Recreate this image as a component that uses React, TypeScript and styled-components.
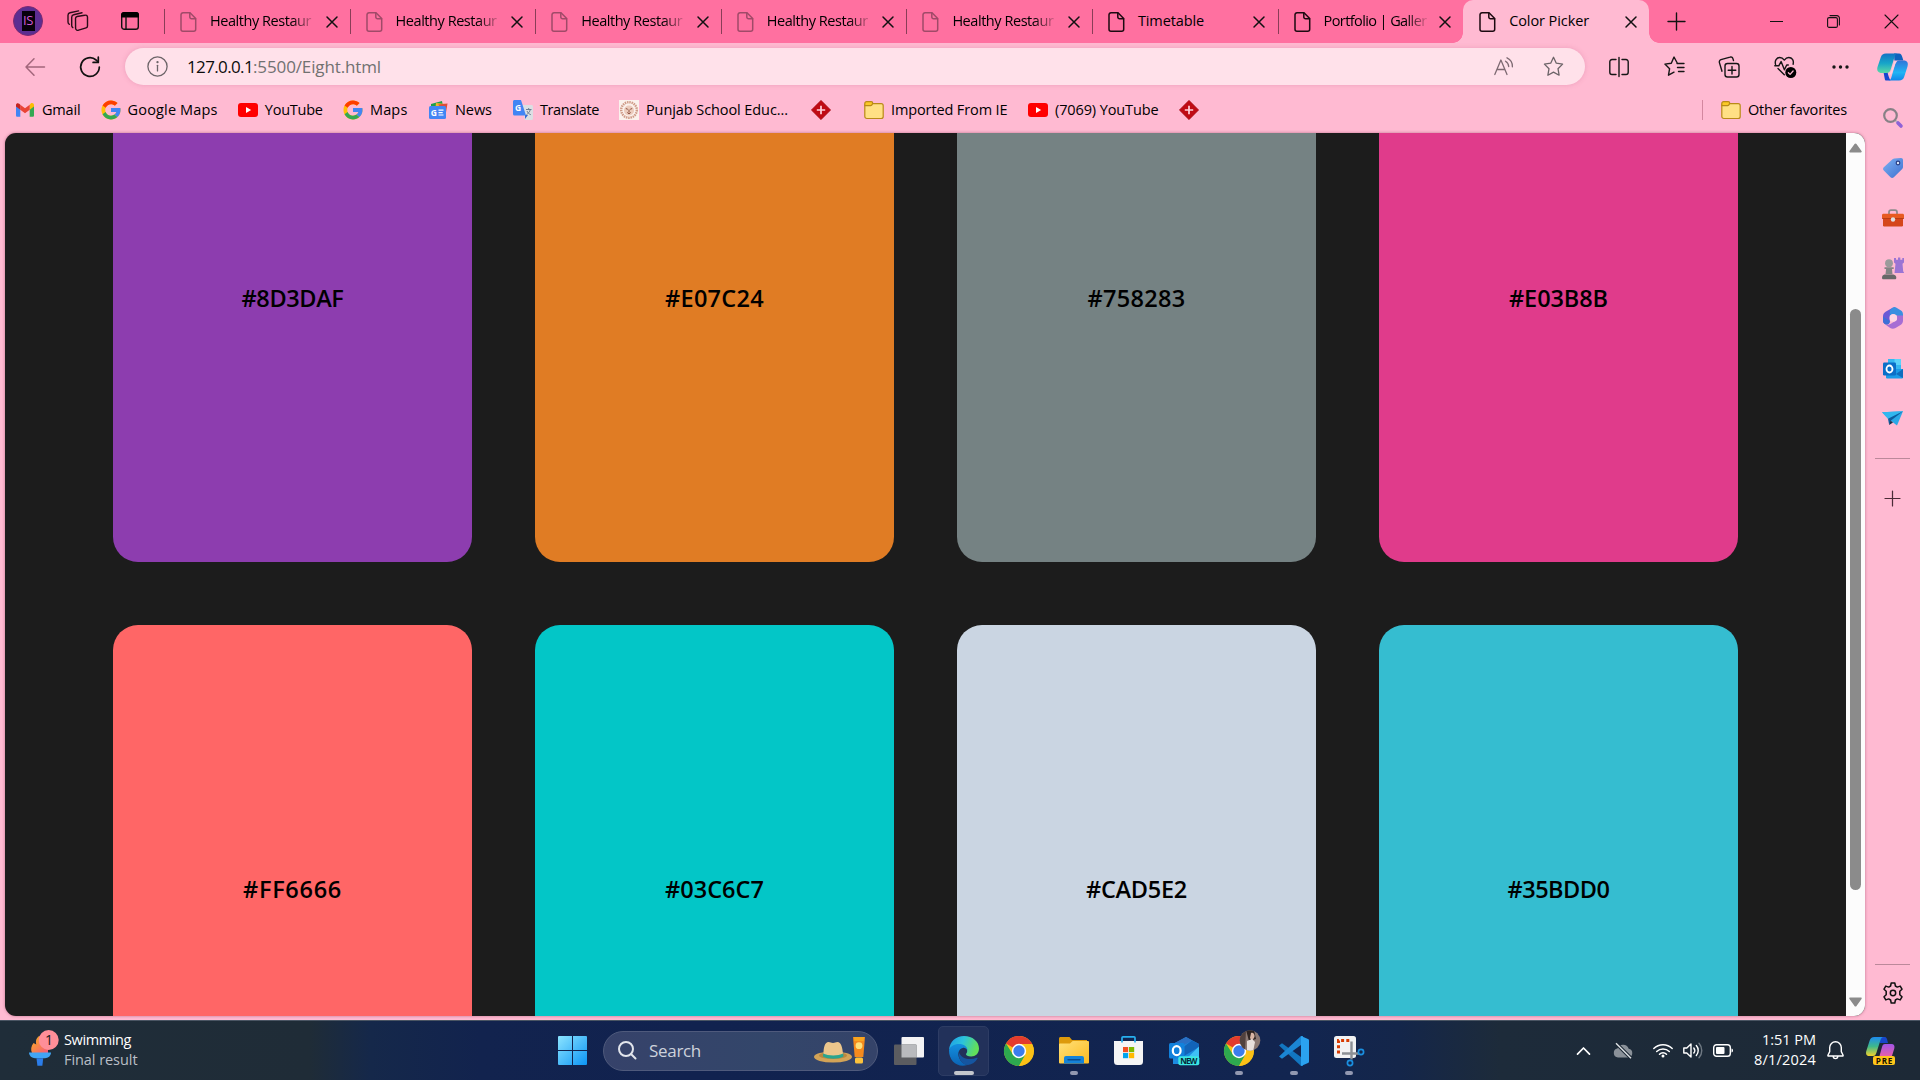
import React, { useLayoutEffect, useRef, useState } from 'react';
import styled, { createGlobalStyle, css } from 'styled-components';

const GlobalStyle = createGlobalStyle`
  *, *::before, *::after { box-sizing: border-box; }
  html, body { margin: 0; padding: 0; overflow: hidden; }
  body { font-family: 'Open Sans', 'Noto Sans', sans-serif; font-size: 14.5px; color: #000; }
  svg { display: block; flex: none; overflow: visible; }
`;

/* ---------- text with a fixed advance width ---------- */

const FitSpan = styled.span`
  display: inline-block;
  white-space: pre;
`;

function Fit({ w, children }: { w: number; children: string }) {
  const ref = useRef<HTMLSpanElement>(null);
  const [spacing, setSpacing] = useState(0);
  useLayoutEffect(() => {
    const el = ref.current;
    if (!el) return;
    el.style.letterSpacing = '0px';
    const natural = el.getBoundingClientRect().width;
    setSpacing((w - natural) / children.length);
    el.style.letterSpacing = `${(w - natural) / children.length}px`;
  }, [w, children]);
  return <FitSpan ref={ref} style={{ letterSpacing: `${spacing}px` }}>{children}</FitSpan>;
}

/* ---------- shell ---------- */

const Desktop = styled.div`
  width: 1920px;
  height: 1080px;
  display: flex;
  flex-direction: column;
  overflow: hidden;
  background: #ffbad2;
`;

const Browser = styled.div`
  height: 1020px;
  display: flex;
  flex-direction: column;
  background: #ffbad2;
`;

const TabStrip = styled.header`
  height: 43px;
  display: flex;
  background: #ff70a0;
`;

const StripTools = styled.div`
  width: 164px;
  display: flex;
  align-items: center;
  padding-left: 13px;
  padding-bottom: 1px;
`;

const Avatar = styled.div`
  width: 30px;
  height: 30px;
  border-radius: 50%;
  background: #5c2d91;
  border: 1px solid #7a2a72;
  display: flex;
  align-items: center;
  justify-content: center;
`;

const AvatarPlate = styled.div`
  width: 13px;
  height: 20px;
  background: #07000c;
  color: #d25ad8;
  font-size: 13px;
  line-height: 18px;
  letter-spacing: -0.5px;
  text-align: center;
`;

const StripIcon = styled.div<{ $left: number }>`
  margin-left: ${(p) => p.$left}px;
`;

const TabBox = styled.div<{ $active?: boolean }>`
  position: relative;
  width: 185.6px;
  height: 43px;
  flex: none;
  display: flex;
  align-items: center;
  padding: 0 0 0 16px;
  ${(p) =>
    p.$active
      ? css`
          background: #ffbad2;
          border-radius: 10px 10px 0 0;
          &::before, &::after {
            content: '';
            position: absolute;
            bottom: 0;
            width: 10px;
            height: 10px;
          }
          &::before { left: -10px; background: radial-gradient(circle at 0 0, transparent 9.5px, #ffbad2 10px); }
          &::after { right: -10px; background: radial-gradient(circle at 100% 0, transparent 9.5px, #ffbad2 10px); }
        `
      : css`
          &::before {
            content: '';
            position: absolute;
            left: 0;
            top: 9px;
            width: 1px;
            height: 25px;
            background: #8a3d57;
          }
        `}
`;

const TabTitle = styled.div<{ $fade?: boolean }>`
  width: 104px;
  margin-left: 13px;
  white-space: nowrap;
  line-height: 20px;
  padding-bottom: 1px;
  ${(p) => p.$fade && css`mask-image: linear-gradient(90deg, #000 82px, transparent 106px);`}
`;

const TabClose = styled.div`
  margin-left: 12.5px;
`;

const NewTab = styled.div`
  width: 56px;
  display: flex;
  align-items: center;
  justify-content: center;
  padding-bottom: 1px;
`;

const WindowButtons = styled.div`
  margin-left: auto;
  display: flex;
`;

const WindowButton = styled.div`
  width: 57.5px;
  display: flex;
  align-items: center;
  justify-content: center;
`;

const BrowserBody = styled.div`
  flex: 1;
  display: flex;
  min-height: 0;
`;

const MainColumn = styled.div`
  width: 1865px;
  display: flex;
  flex-direction: column;
`;

const Toolbar = styled.div`
  height: 47px;
  display: flex;
  align-items: center;
  padding-left: 25px;
`;

const Reload = styled.div`
  margin: 0 24px 0 34px;
`;

const AddressBar = styled.div`
  width: 1460px;
  height: 37px;
  flex: none;
  border-radius: 19px;
  background: #ffe1ea;
  box-shadow: 0 0 5px rgba(190, 90, 130, 0.28);
  display: flex;
  align-items: center;
  padding: 0 21px 0 22px;
  margin-right: 6px;
`;

const Url = styled.div`
  margin-left: 19px;
  flex: 1;
  font-size: 17px;
  line-height: 22px;
  color: #717171;
`;

const UrlHost = styled.span`
  color: #0b0b0b;
`;

const AddressActions = styled.div`
  display: flex;
  gap: 29px;
  align-items: center;
`;

const ToolButton = styled.div`
  width: 55.4px;
  flex: none;
  display: flex;
  justify-content: center;
`;

const BookmarkBar = styled.nav`
  height: 43px;
  display: flex;
  align-items: center;
  padding: 0 0 4px 15px;
`;

const BookmarkItem = styled.div<{ $pitch: number }>`
  width: ${(p) => p.$pitch}px;
  flex: none;
  display: flex;
  align-items: center;
  gap: 7px;
  line-height: 20px;
  white-space: nowrap;
`;

const OtherFavorites = styled.div`
  margin-left: auto;
  width: 163px;
  height: 20px;
  border-left: 1px solid #d3879f;
  padding-left: 18px;
  display: flex;
  align-items: center;
  gap: 7px;
`;

const ViewportRow = styled.div`
  flex: 1;
  min-height: 0;
  padding: 0 0 4px 5px;
`;

const Viewport = styled.div`
  height: 100%;
  display: flex;
  border-radius: 11px;
  overflow: hidden;
  background: #1c1c1c;
  box-shadow: 0 0 3px rgba(120, 40, 70, 0.5);
`;

const PageArea = styled.main`
  flex: 1;
  overflow: hidden;
  display: flex;
  justify-content: center;
  align-items: flex-start;
`;

const Palette = styled.div`
  margin-top: -99px;
  display: grid;
  grid-template-columns: repeat(4, 359px);
  grid-auto-rows: 528px;
  gap: 63px;
  flex: none;
`;

const Swatch = styled.div<{ $color: string }>`
  background: ${(p) => p.$color};
  border-radius: 25px;
  display: flex;
  align-items: center;
  justify-content: center;
  font-family: 'Open Sans', 'Noto Sans', sans-serif;
  font-size: 23.5px;
  font-weight: 600;
  line-height: 28px;
`;

const Scrollbar = styled.div`
  width: 19px;
  background: #fcfcfc;
  display: flex;
  flex-direction: column;
  align-items: center;
  padding: 10px 0 9px;
`;

const ScrollThumb = styled.div`
  width: 11px;
  height: 581px;
  border-radius: 6px;
  background: #8b8b8b;
  margin: 156px 0 107px;
`;

const Sidebar = styled.aside`
  width: 55px;
  display: flex;
  flex-direction: column;
  align-items: center;
`;

const SideCell = styled.div<{ $h: number; $gap?: number }>`
  height: ${(p) => p.$h}px;
  margin-bottom: ${(p) => p.$gap ?? 0}px;
  flex: none;
  display: flex;
  align-items: center;
  justify-content: center;
`;

const SideDivider = styled.div<{ $push?: boolean }>`
  width: 35px;
  height: 1px;
  flex: none;
  background: #bb889a;
  margin-top: ${(p) => (p.$push ? 'auto' : '14px')};
`;

/* ---------- taskbar ---------- */

const Taskbar = styled.footer`
  height: 60px;
  display: flex;
  align-items: center;
  border-top: 1px solid #4a5563;
  background: linear-gradient(90deg, #1f2d39 0, #1f2c37 310px, #15284a 370px, #12234e 480px, #11224f 700px, #122550 1300px, #14264a 1400px, #1d2b3a 1500px, #1d2936 100%);
  color: #fff;
`;

const Widgets = styled.div`
  width: 558px;
  padding-left: 29px;
  display: flex;
  gap: 13px;
  align-items: center;
`;

const WidgetLines = styled.div`
  display: flex;
  flex-direction: column;
  line-height: 20px;
  padding-bottom: 1px;
`;

const Muted = styled.div`
  color: #b9bfc6;
`;

const SearchBox = styled.div`
  width: 275px;
  height: 40px;
  margin: 0 3px 0 16px;
  border-radius: 20px;
  background: linear-gradient(90deg, #36426a, #33466a 60%, #354369);
  border: 1px solid #4f5a7c;
  display: flex;
  align-items: center;
  padding: 0 12px 0 14px;
  font-size: 17px;
  color: #cdd2dc;
`;

const SearchText = styled.div`
  flex: 1;
  padding: 0 0 0 12px;
  line-height: 24px;
`;

const AppSlot = styled.div<{ $active?: boolean; $dot?: boolean }>`
  position: relative;
  width: 51px;
  height: 50px;
  margin: 0 2px;
  border-radius: 5px;
  display: flex;
  align-items: center;
  justify-content: center;
  ${(p) => p.$active && css`background: #22315a; border: 1px solid #2d3c64;`}
  ${(p) =>
    (p.$dot || p.$active) &&
    css`
      &::after {
        content: '';
        position: absolute;
        bottom: ${p.$active ? 0 : 1}px;
        left: 50%;
        transform: translateX(-50%);
        width: ${p.$active ? 20 : 8}px;
        height: 4px;
        border-radius: 2px;
        background: ${p.$active ? '#c3c6cc' : '#9298b0'};
      }
    `}
`;

const Tray = styled.div`
  margin-left: auto;
  display: flex;
  align-items: center;
  padding-right: 14px;
`;

const TrayCell = styled.div<{ $w: number }>`
  width: ${(p) => p.$w}px;
  display: flex;
  justify-content: center;
`;

const Clock = styled.div`
  width: 73px;
  display: flex;
  flex-direction: column;
  align-items: flex-end;
  line-height: 20px;
  padding-bottom: 1px;
`;

/* ---------- icons ---------- */

const line = (stroke = '#161616', w = 1.4) => ({
  fill: 'none',
  stroke,
  strokeWidth: w,
  strokeLinecap: 'round' as const,
  strokeLinejoin: 'round' as const,
});

const FileIcon = ({ color }: { color: string }) => (
  <svg width="17" height="20" viewBox="0 0 17 20" {...line(color, 1.5)}>
    <path d="M3 .8h7l5.700 5.700v10.700a2 2 0 0 1-2 2H3a2 2 0 0 1-2-2V2.800a2 2 0 0 1 2-2z" />
    <path d="M9.800 1v4a1.700 1.700 0 0 0 1.700 1.700h4" />
  </svg>
);

const CrossIcon = ({ s = 10, w = 1.5 }: { s?: number; w?: number }) => (
  <svg width={s} height={s} viewBox="0 0 10 10" {...line('#111', (w * 10) / s)}>
    <path d="M0 0l10 10M10 0L0 10" />
  </svg>
);

const WorkspacesIcon = () => (
  <svg width="22" height="22" viewBox="0 0 22 22" {...line('#2a0c18', 1.4)}>
    <path d="M8.500 8.500a2 2 0 0 1 1.600-2l7.600-1.200a2 2 0 0 1 2.800 1.800v8.800a2 2 0 0 1-1.400 1.900l-7.500 2.400a2.200 2.200 0 0 1-3-2z" />
    <path d="M5.800 17.600a2.300 2.300 0 0 1-1.100-2V7.200a2.600 2.600 0 0 1 2-2.400l8.300-2" />
    <path d="M2.400 14.300A2.400 2.400 0 0 1 1 12.100V5.300a2.600 2.600 0 0 1 2-2.500L11.600.9" />
  </svg>
);

const TabActionsIcon = () => (
  <svg width="18" height="18" viewBox="0 0 18 18">
    <rect x=".7" y=".7" width="16.600" height="16.600" rx="2.600" {...line('#111', 1.4)} />
    <path d="M0 5.500V3a3 3 0 0 1 3-3h12a3 3 0 0 1 3 3v2.500z" fill="#000" />
    <path d="M5 5v12" {...line('#111', 1.4)} />
  </svg>
);

const PlusIcon = ({ s, color = '#111' }: { s: number; color?: string }) => (
  <svg width={s} height={s} viewBox="0 0 16 16" {...line(color, 1.3)}>
    <path d="M8 0v16M0 8h16" />
  </svg>
);

const BackIcon = () => (
  <svg width="20" height="18" viewBox="0 0 20 18" {...line('#a2667b', 1.5)}>
    <path d="M9 .8L1 9l8 8.200M1 9h18.500" />
  </svg>
);

const ReloadIcon = () => (
  <svg width="22" height="22" viewBox="0 0 22 22" {...line('#111', 1.7)}>
    <path d="M20.300 11a9.300 9.300 0 1 1-3.200-7l1.700 1.600" />
    <path d="M19.300 1.200v5.200h-5.200" />
  </svg>
);

const InfoIcon = () => (
  <svg width="21" height="21" viewBox="0 0 21 21" {...line('#6c6468', 1.3)}>
    <circle cx="10.500" cy="10.500" r="9.600" />
    <path d="M10.500 9.300v5.600" />
    <circle cx="10.500" cy="6.200" r=".5" fill="#6c6468" />
  </svg>
);

const ReadAloudIcon = () => (
  <svg width="20" height="20" viewBox="0 0 20 20" {...line('#7d6a72', 1.3)}>
    <path d="M.8 17.500L6.900 3l6.100 14.500M3 12.500h7.800" />
    <path d="M11.500 4.200a6.500 6.500 0 0 1 3.200 5.300M13 .8a9.500 9.500 0 0 1 5.400 9" />
  </svg>
);

const StarIcon = () => (
  <svg width="21" height="21" viewBox="0 0 21 21" {...line('#6c6468', 1.3)}>
    <path d="M10.500 1.300l2.800 5.900 6.300.9-4.600 4.600 1.100 6.500-5.600-3.100-5.600 3.100L6 12.700 1.400 8.100l6.300-.9z" />
  </svg>
);

const SplitIcon = () => (
  <svg width="20" height="20" viewBox="0 0 20 20" {...line()}>
    <path d="M7 2.500H3a2.200 2.200 0 0 0-2.200 2.200v10.600A2.200 2.200 0 0 0 3 17.500h4M13 2.500h4a2.200 2.200 0 0 1 2.200 2.200v10.600a2.200 2.200 0 0 1-2.200 2.200h-4M10 .5v19" />
  </svg>
);

const FavoritesIcon = () => (
  <svg width="21" height="21" viewBox="0 0 21 21" {...line()}>
    <path d="M13.500 7.500L10 1 7.300 7.200.9 8.100l4.700 4.600-1.100 6.500 5.500-3M13 7.500h7M13.500 11.500h6.500M14.500 15.500h5.500" />
  </svg>
);

const CollectionsIcon = () => (
  <svg width="22" height="22" viewBox="0 0 22 22" {...line()}>
    <rect x="7" y="7.500" width="14" height="13.500" rx="2.500" />
    <path d="M14 10.500v7.500M10.200 14.300h7.600M15.500 4.500l-.6-1.900a2.300 2.300 0 0 0-2.900-1.500L3 3.700a2.300 2.300 0 0 0-1.600 2.900l2.600 8.600" />
  </svg>
);

const HealthIcon = () => (
  <svg width="22" height="22" viewBox="0 0 22 22" {...line()}>
    <path d="M1.600 8.500C.4 4.700 2.600 1.500 5.800 1.500c2 0 3.300 1 4.500 2.600 1.200-1.600 2.500-2.600 4.500-2.600 3.200 0 5.300 3 4.300 6.700M4 12.500l6.300 6.300" />
    <path d="M.8 9.800h4l2.300-4.300 3.300 8.300 2.300-4.800h1.600" />
    <circle cx="16.800" cy="16.500" r="5.500" fill="#000" stroke="none" />
    <path d="M14.400 16.700l1.700 1.700 3-3.400" stroke="#ffbad2" strokeWidth="1.300" />
  </svg>
);

const DotsIcon = () => (
  <svg width="17" height="4" viewBox="0 0 17 4" fill="#161616">
    <circle cx="2" cy="2" r="1.700" />
    <circle cx="8.500" cy="2" r="1.700" />
    <circle cx="15" cy="2" r="1.700" />
  </svg>
);

const CopilotIcon = () => (
  <svg width="31" height="28" viewBox="0 0 31 28">
    <defs>
      <linearGradient id="cpA" x1="0" y1="0" x2="0" y2="1">
        <stop offset="0" stopColor="#1473c4" />
        <stop offset=".5" stopColor="#17a5c9" />
        <stop offset="1" stopColor="#5bd9a5" />
      </linearGradient>
      <linearGradient id="cpB" x1="0" y1="0" x2="0" y2="1">
        <stop offset="0" stopColor="#2f74d8" />
        <stop offset=".6" stopColor="#20b4f4" />
        <stop offset="1" stopColor="#0f86ea" />
      </linearGradient>
    </defs>
    <path d="M17 .5h5c2 0 2.600 1.300 3.200 3.300l1.200 3.700h-9z" fill="#0f62bd" />
    <path d="M8.500 27.500h5c-1-2-2.300-4.500-3-8.500h-4l1 5.500c.3 1.700.5 2.500 1 3z" fill="#1745cf" />
    <path d="M9 .5h12c-2 0-2.700 1.200-3.300 3l-4 13C13 18.700 12 20 9.500 20H5c-4 0-5.500-2.600-4.500-6L3.800 4.300C4.700 1.700 6 .5 9 .5z" fill="url(#cpA)" />
    <path d="M22 27.500H11c2 0 2.700-1.300 3.300-3l4-13.500c.7-2.300 1.700-3.500 4-3.500h4.200c4 0 5 2.600 4 6L27.200 23.700c-.9 2.600-2.200 3.800-5.200 3.800z" fill="url(#cpB)" />
    <path d="M17.500 8.500h2.800c-1.500.7-2 2-2.500 3.500L15 20c-.5 1-1.500 1.500-3 1.500 1-.7 1.700-2 2.200-3.500z" fill="#ffd0e0" />
  </svg>
);

const GmailIcon = () => (
  <svg width="20" height="20" viewBox="0 0 20 20">
    <path d="M1 5v10.500c0 .8.600 1.300 1.300 1.300h3V9z" fill="#4285f4" />
    <path d="M19 5v10.500c0 .8-.6 1.300-1.300 1.300h-3V9z" fill="#34a853" />
    <path d="M14.700 4.700V9.800L19 6.500V5c0-1.800-2-2.500-3.300-1.500z" fill="#fbbc04" />
    <path d="M5.300 9.800V4.700L10 8.200l4.700-3.500v5.100L10 13.300z" fill="#ea4335" />
    <path d="M1 5v1.500l4.300 3.300V4.700l-1-.9C3 2.600 1 3.300 1 5z" fill="#c5221f" />
  </svg>
);

const GoogleIcon = () => (
  <svg width="20" height="20" viewBox="3 3 42 42">
    <path fill="#FFC107" d="M43.600 20H24v8h11.300c-1.600 4.700-6.100 8-11.300 8-6.600 0-12-5.400-12-12s5.400-12 12-12c3.100 0 5.900 1.200 8 3l5.700-5.600C34 6.100 29.300 4 24 4 13 4 4 13 4 24s9 20 20 20 20-9 20-20c0-1.300-.1-2.700-.4-4z" />
    <path fill="#FF3D00" d="M6.300 14.700l6.600 4.800C14.700 15.100 19 12 24 12c3.100 0 5.900 1.200 8 3l5.700-5.600C34 6.100 29.300 4 24 4 16.300 4 9.700 8.300 6.300 14.700z" />
    <path fill="#34A853" d="M24 44c5.200 0 9.900-2 13.400-5.200l-6.200-5.200C29.200 35.100 26.700 36 24 36c-5.200 0-9.600-3.300-11.300-7.900l-6.500 5C9.500 39.600 16.200 44 24 44z" />
    <path fill="#4285F4" d="M43.600 20H24v8h11.300c-.8 2.200-2.200 4.200-4.100 5.600l6.200 5.200C37 39.200 44 34 44 24c0-1.300-.1-2.700-.4-4z" />
  </svg>
);

const YouTubeIcon = () => (
  <svg width="20" height="20" viewBox="0 0 20 20">
    <rect y="3" width="20" height="14" rx="3" fill="#f00" />
    <path d="M8 7l5.200 3L8 13z" fill="#fff" />
  </svg>
);

const SvgLabel = styled.text`
  font-family: 'Open Sans', sans-serif;
  font-weight: 700;
`;

const NewsIcon = () => (
  <svg width="20" height="20" viewBox="0 0 20 20">
    <path d="M3 4l11-3 1 5H3z" fill="#1e9e4a" />
    <path d="M8 3l10 1-1 8H7z" fill="#f0b429" />
    <path d="M10 4.500l9.500-1-1.500 9z" fill="#dd4b39" />
    <rect x="1" y="6" width="17" height="13" rx="1.500" fill="#4285f4" />
    <SvgLabel x="2.800" y="15.800" fontSize="8.500" fill="#fff">G</SvgLabel>
    <path d="M10.500 10.200h5M10.500 12.600h4.200M10.500 15h5" stroke="#fff" strokeWidth="1.200" />
  </svg>
);

const TranslateIcon = () => (
  <svg width="20" height="20" viewBox="0 0 20 20">
    <path d="M8 5h10.500c.8 0 1.500.7 1.500 1.500v12c0 .8-.7 1.500-1.500 1.500H12z" fill="#dcdfe3" />
    <path d="M12 15h3l-3 4z" fill="#3367d6" />
    <path d="M1.500 0H8l5 15.500H1.500A1.500 1.500 0 0 1 0 14V1.500C0 .7.700 0 1.500 0z" fill="#4285f4" />
    <SvgLabel x="2" y="10.600" fontSize="8.500" fill="#fff">G</SvgLabel>
    <path d="M13 9.500h5.500M15.700 8v1.500M17.300 9.500c-.5 2.500-2 4-3.800 5M14 11c.6 1.600 2 3 3.800 3.700" stroke="#6b7f94" strokeWidth="1" fill="none" />
  </svg>
);

const LionIcon = () => (
  <svg width="20" height="20" viewBox="0 0 20 20">
    <rect width="20" height="20" fill="#fbf1ec" />
    <circle cx="10" cy="10" r="7.800" fill="none" stroke="#cf9a86" strokeWidth="2.400" strokeDasharray="1.500 .8" />
    <circle cx="10" cy="10.500" r="5" fill="#eccbbc" />
    <path d="M6.800 8.500l2 .8M13.200 8.500l-2 .8M8.300 12.500L10 13.800l1.700-1.300M10 9.500v3" stroke="#8d4e3c" strokeWidth="1" fill="none" />
  </svg>
);

const DiamondIcon = () => (
  <svg width="20" height="20" viewBox="0 0 20 20">
    <path d="M10 .3L19.700 10 10 19.700.3 10z" fill="#bf0b14" stroke="#a3141c" strokeWidth=".6" />
    <path d="M10 5.800v8.400M5.800 10h8.400" stroke="#ffd3dc" strokeWidth="1.700" />
  </svg>
);

const FolderIcon = () => (
  <svg width="20" height="20" viewBox="0 0 20 20">
    <rect x=".8" y="3.700" width="18.400" height="14.800" rx="2" fill="#ffe084" stroke="#b98a17" strokeWidth="1.200" />
    <path d="M2.600 1.600h4.600c.8 0 1.500.6 1.500 1.400L8.200 4.600c-.3.700-.8 1-1.500 1H.8V3.400c0-1 .8-1.800 1.800-1.800z" fill="#fbc926" stroke="#b98a17" strokeWidth="1.200" />
  </svg>
);

const SideSearchIcon = () => (
  <svg width="20" height="20" viewBox="0 0 20 20" fill="none" strokeLinecap="round">
    <path d="M13 13l1.500 1.500" stroke="#b9b3bb" strokeWidth="2" />
    <path d="M15 15l3 3" stroke="#8f62d6" strokeWidth="3.600" />
    <circle cx="7.500" cy="7.500" r="6.300" stroke="#888186" strokeWidth="2.200" />
  </svg>
);

const TagIcon = () => (
  <svg width="20" height="20" viewBox="0 0 20 20">
    <defs>
      <linearGradient id="tg" x1="0" y1="0" x2="1" y2="1">
        <stop offset="0" stopColor="#7cb2f2" />
        <stop offset="1" stopColor="#3f6fd0" />
      </linearGradient>
    </defs>
    <path d="M11.500.5L18 0c1.200 0 2 .8 2 2v7c0 .8-.2 1.300-.8 1.900l-8.400 8.300c-1 1-2.300 1-3.300 0L.8 12.600c-1-1-1-2.300 0-3.300L9.500 1.300c.6-.5 1.200-.7 2-.8z" fill="url(#tg)" />
    <circle cx="15" cy="5" r="1.800" fill="#dce8f8" stroke="#2b3f85" strokeWidth="1.200" />
  </svg>
);

const ToolboxIcon = () => (
  <svg width="22" height="18" viewBox="0 0 22 18">
    <path d="M7 5V3.200C7 2 7.800 1.200 9 1.200h4c1.200 0 2 .8 2 2V5" stroke="#8e8a8c" strokeWidth="1.800" fill="none" />
    <rect x="1" y="8" width="20" height="9.500" rx="1.200" fill="#d5461b" />
    <path d="M1.500 4.700h19c.8 0 1.500.6 1.500 1.300v3.500H0V6c0-.7.700-1.300 1.500-1.300z" fill="#e75a21" />
    <path d="M0 9.500h22" stroke="#a9330e" strokeWidth=".7" />
    <circle cx="11" cy="10.500" r="2.200" fill="#dfe0e2" />
  </svg>
);

const ChessIcon = () => (
  <svg width="22" height="23" viewBox="0 0 22 23">
    <path d="M12 1h2v1.800h2V.5h2.300v2.300h2V1H22v4.500l-1.500 1.300.7 7.700c.5.200.8.800.8 1.500H12.500l1-9.200L12 5.500z" fill="#9b74d4" />
    <circle cx="7" cy="6.200" r="3.900" fill="#9b9b9b" />
    <path d="M2.500 10.300h9.200v1.800H10l.5 5.200h-7l.6-5.200H2.500z" fill="#858585" />
    <path d="M2.500 17.500h9c1.500.3 2.800 1.500 2.800 3.300 0 1-.5 1.500-1.500 1.500H1.500C.5 22.300 0 21.800 0 20.800c0-1.800 1-3 2.500-3.300z" fill="#686868" />
  </svg>
);

const M365Icon = () => (
  <svg width="20" height="22" viewBox="0 0 20 22">
    <path d="M10.500.3L3 4.500C1 5.700 0 7 0 9.200v4.600c0 2 1.500 3.700 3.500 3.700 3 0 3.300-2 3.300-4.300V9c0-2 1.200-3.300 3-3.800z" fill="#6a59d6" />
    <path d="M10.500.3c1-.5 2-.2 3 .4L18 3.500c1.500 1 2 2.500 2 4v5L13.200 8.200c-1.700-1-2.900-1.600-4.700-.6l-1.700 1.300V5c0-2 1.500-3.700 3.700-4.700z" fill="#3a8fe0" />
    <path d="M20 8.500v5.200c0 2-1 3.300-2.500 4.200l-5 3c-1.800 1-3.700 1-5.300 0L3 18c3 .2 4.500-1 6-2l4-2.500c1-.6 1-1.300 1-2.200V8.500z" fill="#a66dd4" />
    <path d="M0 9.500v4.300c0 2 1.500 3.700 3.500 3.700 2.300 0 3.300-1.500 3.300-3.500z" fill="#3e6fd6" />
    <circle cx="10.300" cy="11" r="3.800" fill="#ffd6e4" />
  </svg>
);

const SideOutlookIcon = () => (
  <svg width="20" height="20" viewBox="0 0 20 20">
    <path d="M5 0h13v12H5z" fill="#35b8f1" />
    <path d="M11.500 0H18v6h-6.500z" fill="#5bd3fa" />
    <path d="M3 10h17v8.500a1 1 0 0 1-1 1H4a1 1 0 0 1-1-1z" fill="#1b9be8" />
    <path d="M20 10l-7 5 7 4z" fill="#0f6dbd" />
    <rect y="3.500" width="13" height="13" rx="1.200" fill="#0b6fc8" />
    <ellipse cx="6.500" cy="10" rx="3" ry="3.500" fill="none" stroke="#fff" strokeWidth="1.800" />
  </svg>
);

const PlaneIcon = () => (
  <svg width="21" height="15" viewBox="0 0 21 15">
    <path d="M0 1.200L21 .3 15 14.500 8.500 9.500z" fill="#2aa8e6" />
    <path d="M0 1.200L21 .3 6 8z" fill="#31b7ef" />
    <path d="M6 7.800L21 .3 9 9.600 7.200 14z" fill="#0d5c9e" />
    <path d="M7.200 14l1.300-4.500 2.500 2z" fill="#14324d" />
  </svg>
);

const GearIcon = () => (
  <svg width="22" height="22" viewBox="0 0 22 22" {...line('#111', 1.5)}>
    <path d="M9.200 1h3.600l.6 3 1.900 1.100 2.900-1L20 7.200l-2.200 2v3.600l2.200 2-1.800 3.100-2.900-1-1.900 1.100-.6 3H9.200l-.6-3-1.900-1.100-2.900 1L2 14.800l2.200-2V9.200L2 7.200l1.800-3.100 2.900 1L8.600 4z" />
    <circle cx="11" cy="11" r="2.700" />
  </svg>
);

const Triangle = ({ down }: { down?: boolean }) => (
  <svg width="13" height="10" viewBox="0 0 13 10" fill="#8b8b8b">
    <path d={down ? 'M1.200.5h10.600c.9 0 1.200.7.700 1.400L7.500 9c-.5.700-1.500.7-2 0L.5 1.900C0 1.200.3.500 1.200.5z' : 'M1.200 9.500h10.600c.9 0 1.200-.7.700-1.400L7.500 1c-.5-.7-1.500-.7-2 0L.5 8.100c-.5.700-.2 1.400.7 1.400z'} />
  </svg>
);

const BadgeNumber = styled.text`
  font-family: 'Open Sans', sans-serif;
  font-size: 14px;
`;

const TorchIcon = () => (
  <svg width="22" height="30" viewBox="0 0 22 30">
    <defs>
      <linearGradient id="fl" x1="0" y1="0" x2="1" y2="1">
        <stop offset="0" stopColor="#f9b21a" />
        <stop offset="1" stopColor="#f4587c" />
      </linearGradient>
    </defs>
    <path d="M10 0C6 3 7 7 7.300 8.500L4.500 7C2 10 1.500 14 3 17h16V4z" fill="url(#fl)" />
    <path d="M0 16.500h22c0 3.500-3 5.700-6 5.700H6c-3 0-6-2.200-6-5.700z" fill="#41a5f5" />
    <path d="M7.500 22.200h6.700l-.8 7.600h-5z" fill="#2b7de9" />
    <circle cx="19.700" cy="4" r="10" fill="#ff8e98" />
    <BadgeNumber x="16" y="9" fill="#17171a">1</BadgeNumber>
  </svg>
);

const StartIcon = () => (
  <svg width="29" height="29" viewBox="0 0 29 29">
    <defs>
      <linearGradient id="st" x1="0" y1="0" x2="1" y2="1">
        <stop offset="0" stopColor="#8ce4ff" />
        <stop offset="1" stopColor="#0c95f5" />
      </linearGradient>
    </defs>
    <path d="M1 0h13v14H0V1a1 1 0 0 1 1-1zM15 0h13a1 1 0 0 1 1 1v13H15zM0 15h14v14H1a1 1 0 0 1-1-1zM15 15h14v13a1 1 0 0 1-1 1H15z" fill="url(#st)" />
  </svg>
);

const SearchGlass = () => (
  <svg width="19" height="19" viewBox="0 0 19 19" fill="none" stroke="#e2e5ec" strokeWidth="2" strokeLinecap="round">
    <circle cx="8" cy="8" r="7" />
    <path d="M13 13l4.500 4.500" />
  </svg>
);

const SummerIcon = () => (
  <svg width="51" height="27" viewBox="0 0 51 27">
    <ellipse cx="19" cy="20" rx="19" ry="5.500" fill="#d3a357" />
    <ellipse cx="19" cy="18.500" rx="14" ry="3.500" fill="#b98840" />
    <path d="M9.500 17C9.500 10 11 5 14.500 5c2 0 2.500 1 4.500 1s2.500-1 4.500-1C27 5 28.500 10 29 17c-4 3.500-15.500 3.500-19.500 0z" fill="#ecc68c" />
    <path d="M9.200 16.500c5 2.500 15 2.500 20 0l.3 3c-5 3-15.600 3-20.600 0z" fill="#2aa58f" />
    <path d="M39 0h12l-1.700 20h-8.600z" fill="#f58a1d" />
    <path d="M40 0h10l-.3 4h-9.400z" fill="#f9a51f" />
    <circle cx="45" cy="8.700" r="3.400" fill="#ffe07a" />
    <rect x="41" y="20.500" width="8" height="6" rx="1.500" fill="#fcc23c" />
  </svg>
);

const TaskViewIcon = () => (
  <svg width="30" height="28" viewBox="0 0 30 28">
    <rect x="7.500" y="0" width="22.500" height="20.500" rx="1" fill="#f3f3f4" />
    <rect x="0" y="7.500" width="22.500" height="20.500" rx="1" fill="#5b5c60" />
    <path d="M7.500 7.500h15v13h-15z" fill="#b9babd" />
  </svg>
);

const EdgeIcon = () => (
  <svg width="30" height="30" viewBox="0 0 30 30">
    <defs>
      <linearGradient id="e1" x1="0" y1="0" x2="1" y2=".3">
        <stop offset="0" stopColor="#1c9be8" />
        <stop offset=".5" stopColor="#2cc3dc" />
        <stop offset="1" stopColor="#62e05a" />
      </linearGradient>
      <linearGradient id="e2" x1="0" y1="0" x2="0" y2="1">
        <stop offset="0" stopColor="#1390e0" />
        <stop offset="1" stopColor="#0b63b4" />
      </linearGradient>
    </defs>
    <path d="M0 14C.7 5.500 7 0 15 0c8.500 0 15 5.500 15 12.500 0 5-3.500 8-7.800 8-3.500 0-5.200-1-5.200-2.200 0-.8 1.200-1.300 1.200-3.300 0-3.500-3.500-6-7.700-6C5.500 9 1.500 11 0 14z" fill="url(#e1)" />
    <path d="M0 14.500C.8 10.500 5 8 10 8c4.800 0 8.500 2.500 8.500 6.500-1-2-3-3-4.800-2.500-4 1-5.500 5.500-3.500 10 1.500 3.500 4 6 8 7C8.500 32 0 25 0 14.500z" fill="url(#e2)" />
    <path d="M10 16.500C9 23 13.500 29 19 29c4-.5 7.500-3 9.500-6.500.3-.6-.2-1-.8-.7-7 3-15.500.7-17.700-5.300z" fill="#1555a0" />
  </svg>
);

const ChromeArt = () => (
  <>
    <circle cx="15" cy="15" r="15" fill="#fbc116" />
    <path d="M15 15L2 7.500A15 15 0 0 1 28 7.500L28 8H15z" fill="#e33b2e" />
    <path d="M2 7.500A15 15 0 0 0 15 30l6.500-11.200L15 22 8.900 18.500z" fill="#2da94f" />
    <path d="M15 8h13A15 15 0 0 1 15 30l6.500-11.200z" fill="#fbc116" />
    <circle cx="15" cy="15" r="7.200" fill="#fff" />
    <circle cx="15" cy="15" r="5.700" fill="#3b7ded" />
  </>
);

const ChromeIcon = () => (
  <svg width="30" height="30" viewBox="0 0 30 30">
    <ChromeArt />
  </svg>
);

const ChromeProfileIcon = () => (
  <svg width="30" height="30" viewBox="0 0 30 30">
    <defs>
      <clipPath id="pf"><circle cx="26" cy="4.500" r="10.300" /></clipPath>
    </defs>
    <ChromeArt />
    <g clipPath="url(#pf)">
      <rect x="15" y="-6" width="22" height="22" fill="#8b7873" />
      <path d="M15-6h7l-1 22h-6z" fill="#51413e" />
      <path d="M22-6h8l2 9-7 2z" fill="#2e2422" />
      <path d="M27-3c2-1 4 1 3.500 4L28 5l-2-3z" fill="#d9b5a4" />
      <path d="M23 5l5-2 3 3-2 10h-6z" fill="#e8e0dd" />
    </g>
  </svg>
);

const ExplorerIcon = () => (
  <svg width="30" height="27" viewBox="0 0 30 27">
    <defs>
      <linearGradient id="ex" x1="0" y1="0" x2="1" y2="1">
        <stop offset="0" stopColor="#ffe07a" />
        <stop offset="1" stopColor="#fdbb1f" />
      </linearGradient>
    </defs>
    <path d="M1.500 0h9l2.500 3H28v6H0V1.500C0 .7.700 0 1.500 0z" fill="#dd9a0c" />
    <path d="M1 6.500h10l2.700-2.500H29a1 1 0 0 1 1 1v20.500a1 1 0 0 1-1 1H1a1 1 0 0 1-1-1v-18a1 1 0 0 1 1-1z" fill="url(#ex)" />
    <path d="M5 26.500V21a2 2 0 0 1 2-2h16a2 2 0 0 1 2 2v5.500z" fill="#1583d8" />
    <path d="M9 22.700h12" stroke="#0a4d8f" strokeWidth="1.400" strokeLinecap="round" />
  </svg>
);

const StoreIcon = () => (
  <svg width="29" height="29" viewBox="0 0 29 29">
    <path d="M0 5h29v20.500a3.500 3.500 0 0 1-3.500 3.500h-22A3.500 3.500 0 0 1 0 25.500z" fill="#f5f5f5" />
    <path d="M8 6.500V1.800C8 1.200 8.400.8 9 .8h11c.6 0 1 .4 1 1v4.700" stroke="#27b0ef" strokeWidth="1.700" fill="none" />
    <path d="M9 11h5.200v5.200H9z" fill="#f25022" />
    <path d="M15 11h5.200v5.200H15z" fill="#7fba00" />
    <path d="M9 17h5.200v5.200H9z" fill="#00a4ef" />
    <path d="M15 17h5.200v5.200H15z" fill="#ffb900" />
  </svg>
);

const OutlookNewIcon = () => (
  <svg width="30" height="28" viewBox="0 0 30 28">
    <path d="M4 7L17 0l13 7v20H4z" fill="#1c8be0" />
    <path d="M4 7L17 0l6 3.500L9 12z" fill="#2a6fc4" />
    <path d="M23 3.500L30 7v3L15 19l-2-8z" fill="#1263b8" />
    <path d="M30 9.500V27H12z" fill="#3fc0f7" />
    <rect y="6" width="15.500" height="15.500" rx="1.500" fill="#1181dc" />
    <ellipse cx="7.700" cy="13.700" rx="3.900" ry="4.500" fill="none" stroke="#fff" strokeWidth="2.200" />
    <rect x="9.300" y="19.200" width="21" height="9" rx="2" fill="#3be6e4" />
    <SvgLabel x="11.300" y="26.800" fontSize="8.200" textLength="17" fill="#062a3a">NEW</SvgLabel>
  </svg>
);

const VsCodeIcon = () => (
  <svg width="30" height="30" viewBox="0 0 30 30">
    <path d="M0 9.500l3-2.300L24 22.500V30h-2z" fill="#1276c0" />
    <path d="M0 20.500l3 2.300L24 7.500V0h-2z" fill="#1b86d4" />
    <path d="M22 0l7 3c.7.300 1 .8 1 1.500v21c0 .7-.3 1.200-1 1.500l-7 3z" fill="#2ba2ef" />
  </svg>
);

const SnipIcon = () => (
  <svg width="30" height="30" viewBox="0 0 30 30">
    <rect width="22" height="22" rx="2.500" fill="#f1f2f3" />
    <path d="M4.500 17.500v-13h12" fill="none" stroke="#d83b01" strokeWidth="3" strokeDasharray="3 2.200" />
    <path d="M17.500 5.500v18M8 17.500h17" stroke="#8c9095" strokeWidth="2.400" />
    <circle cx="27" cy="16" r="2.600" fill="none" stroke="#1a8fe0" strokeWidth="1.700" />
    <circle cx="16" cy="27" r="2.600" fill="none" stroke="#1a8fe0" strokeWidth="1.700" />
  </svg>
);

const ChevronUp = () => (
  <svg width="13" height="8" viewBox="0 0 13 8" {...line('#fff', 1.7)}>
    <path d="M.5 7.200l6-6.200 6 6.200" />
  </svg>
);

const CloudOff = () => (
  <svg width="20" height="16" viewBox="0 0 20 16">
    <path d="M5 14.500a4.500 4.500 0 0 1-.6-8.900A6 6 0 0 1 15.700 5.800a4.400 4.400 0 0 1-.4 8.700z" fill="#8a9199" />
    <path d="M3 .2l15 15" stroke="#1d2936" strokeWidth="3.500" />
    <path d="M3 .2l15 15" stroke="#dfe2e5" strokeWidth="1.400" />
  </svg>
);

const Wifi = () => (
  <svg width="20" height="15" viewBox="0 0 20 15" {...line('#fff', 1.5)}>
    <path d="M.8 5.500a13 13 0 0 1 18.400 0M3.700 8.500a9 9 0 0 1 12.600 0M6.500 11.300a5 5 0 0 1 7 0" />
    <circle cx="10" cy="13" r="1.500" fill="#fff" stroke="none" />
  </svg>
);

const Volume = () => (
  <svg width="20" height="17" viewBox="0 0 20 17" {...line('#fff', 1.4)}>
    <path d="M.8 6v5h3l4.200 4V2L3.800 6z" />
    <path d="M10.800 6a4 4 0 0 1 0 5M13.300 3.500a7.500 7.500 0 0 1 0 10" />
    <path d="M16 1.200a11 11 0 0 1 0 14.600" stroke="#6f7983" />
  </svg>
);

const Battery = () => (
  <svg width="20" height="13" viewBox="0 0 20 13">
    <rect x=".7" y=".7" width="16.600" height="11.600" rx="2.800" {...line('#fff', 1.4)} />
    <rect x="3" y="3" width="8.500" height="7" rx="1" fill="#fff" />
    <path d="M18.500 4.500c1 .3 1.500 1 1.500 2s-.5 1.700-1.500 2z" fill="#fff" />
  </svg>
);

const Bell = () => (
  <svg width="17" height="19" viewBox="0 0 17 19" {...line('#fff', 1.4)}>
    <path d="M8.500.8A5.800 5.800 0 0 0 2.700 6.600v4L.9 14.300c-.1.400.1.700.5.700h14.200c.4 0 .6-.3.500-.7l-1.800-3.700v-4A5.800 5.800 0 0 0 8.500.8zM6.200 15.300a2.300 2.300 0 0 0 4.600 0" />
  </svg>
);

const CopilotPre = () => (
  <svg width="29" height="28" viewBox="0 0 29 28">
    <defs>
      <linearGradient id="p1" x1="0" y1="0" x2="0" y2="1">
        <stop offset="0" stopColor="#1d8cf0" />
        <stop offset=".5" stopColor="#3fb98a" />
        <stop offset="1" stopColor="#f2d32c" />
      </linearGradient>
      <linearGradient id="p2" x1="0" y1="0" x2="0" y2="1">
        <stop offset="0" stopColor="#a255e8" />
        <stop offset="1" stopColor="#f6629a" />
      </linearGradient>
    </defs>
    <path d="M13 0h5.500c2 0 2.500 1.500 3.500 6h-8z" fill="#1746c9" />
    <path d="M8.500 0H18c-2.500 0-3 1.500-3.500 3l-4 12.500C9.700 18 9 19 7 19H3.500C.5 19-.5 17 .3 14L3.500 4C4.400 1.200 5.500 0 8.500 0z" fill="url(#p1)" />
    <path d="M19 7h6.500c2.500 0 3.500 1.800 2.800 4.500L25 22H11c1.500-.5 2-1.500 2.500-3l2.500-9c.5-2 1.300-3 3-3z" fill="url(#p2)" />
    <rect x="7" y="19" width="22" height="9" rx="2" fill="#ffc61a" />
    <SvgLabel x="9.800" y="26.500" fontSize="8.200" textLength="16.500" fill="#191200">PRE</SvgLabel>
  </svg>
);

/* ---------- data ---------- */

const tabs = [
  ...Array.from({ length: 5 }, () => ({ title: 'Healthy Restaur', w: 101, fade: true, dim: true, active: false })),
  { title: 'Timetable', w: 66, fade: false, dim: false, active: false },
  { title: 'Portfolio | Galler', w: 103, fade: true, dim: false, active: false },
  { title: 'Color Picker', w: 80, fade: false, dim: false, active: true },
];

const bookmarks = [
  { icon: GmailIcon, text: 'Gmail', w: 38.5, pitch: 85.6 },
  { icon: GoogleIcon, text: 'Google Maps', w: 90, pitch: 137.2 },
  { icon: YouTubeIcon, text: 'YouTube', w: 58, pitch: 105.2 },
  { icon: GoogleIcon, text: 'Maps', w: 37.5, pitch: 85 },
  { icon: NewsIcon, text: 'News', w: 37, pitch: 85 },
  { icon: TranslateIcon, text: 'Translate', w: 59, pitch: 106 },
  { icon: LionIcon, text: 'Punjab School Educ...', w: 142, pitch: 192 },
  { icon: DiamondIcon, text: '', w: 0, pitch: 53 },
  { icon: FolderIcon, text: 'Imported From IE', w: 116.5, pitch: 164 },
  { icon: YouTubeIcon, text: '(7069) YouTube', w: 103.5, pitch: 151 },
  { icon: DiamondIcon, text: '', w: 0, pitch: 20 },
];

const swatches = [
  { hex: '#8D3DAF', w: 102 },
  { hex: '#E07C24', w: 99 },
  { hex: '#758283', w: 98 },
  { hex: '#E03B8B', w: 99 },
  { hex: '#FF6666', w: 99 },
  { hex: '#03C6C7', w: 99 },
  { hex: '#CAD5E2', w: 101 },
  { hex: '#35BDD0', w: 102 },
];

const sideIcons = [SideSearchIcon, TagIcon, ToolboxIcon, ChessIcon, M365Icon, SideOutlookIcon, PlaneIcon];
const toolIcons = [SplitIcon, FavoritesIcon, CollectionsIcon, HealthIcon, DotsIcon];

const apps = [
  { icon: TaskViewIcon },
  { icon: EdgeIcon, active: true },
  { icon: ChromeIcon },
  { icon: ExplorerIcon, dot: true },
  { icon: StoreIcon },
  { icon: OutlookNewIcon },
  { icon: ChromeProfileIcon, dot: true },
  { icon: VsCodeIcon, dot: true },
  { icon: SnipIcon, dot: true },
];

export default function App() {
  return (
    <Desktop>
      <GlobalStyle />
      <Browser>
        <TabStrip>
          <StripTools>
            <Avatar><AvatarPlate>IS</AvatarPlate></Avatar>
            <StripIcon $left={24}><WorkspacesIcon /></StripIcon>
            <StripIcon $left={32}><TabActionsIcon /></StripIcon>
          </StripTools>
          {tabs.map((t, i) => (
            <TabBox key={i} $active={t.active}>
              <FileIcon color={t.dim ? '#a04a68' : '#1c0a11'} />
              <TabTitle $fade={t.fade}><Fit w={t.w}>{t.title}</Fit></TabTitle>
              <TabClose><CrossIcon /></TabClose>
            </TabBox>
          ))}
          <NewTab><PlusIcon s={17} /></NewTab>
          <WindowButtons>
            <WindowButton>
              <svg width="13" height="1" viewBox="0 0 13 1"><path d="M0 .5h13" stroke="#111" /></svg>
            </WindowButton>
            <WindowButton>
              <svg width="13" height="13" viewBox="0 0 13 13" {...line('#111', 1.1)}>
                <rect x=".6" y="2.600" width="9.800" height="9.800" rx="1.500" />
                <path d="M3 .6h6.900a2.500 2.500 0 0 1 2.500 2.500V10" />
              </svg>
            </WindowButton>
            <WindowButton><CrossIcon s={13} w={1.1} /></WindowButton>
          </WindowButtons>
        </TabStrip>
        <BrowserBody>
          <MainColumn>
            <Toolbar>
              <BackIcon />
              <Reload><ReloadIcon /></Reload>
              <AddressBar>
                <InfoIcon />
                <Url>
                  <UrlHost><Fit w={66}>127.0.0.1</Fit></UrlHost>
                  <Fit w={128}>:5500/Eight.html</Fit>
                </Url>
                <AddressActions><ReadAloudIcon /><StarIcon /></AddressActions>
              </AddressBar>
              {toolIcons.map((Icon, i) => <ToolButton key={i}><Icon /></ToolButton>)}
            </Toolbar>
            <BookmarkBar>
              {bookmarks.map((b, i) => (
                <BookmarkItem key={i} $pitch={b.pitch}>
                  <b.icon />
                  {b.text && <Fit w={b.w}>{b.text}</Fit>}
                </BookmarkItem>
              ))}
              <OtherFavorites><FolderIcon /><Fit w={99}>Other favorites</Fit></OtherFavorites>
            </BookmarkBar>
            <ViewportRow>
              <Viewport>
                <PageArea>
                  <Palette>
                    {swatches.map((s) => (
                      <Swatch key={s.hex} $color={s.hex}><Fit w={s.w}>{s.hex}</Fit></Swatch>
                    ))}
                  </Palette>
                </PageArea>
                <Scrollbar>
                  <Triangle />
                  <ScrollThumb />
                  <Triangle down />
                </Scrollbar>
              </Viewport>
            </ViewportRow>
          </MainColumn>
          <Sidebar>
            <SideCell $h={47} $gap={2.5}><CopilotIcon /></SideCell>
            {sideIcons.map((Icon, i) => <SideCell key={i} $h={50.2}><Icon /></SideCell>)}
            <SideDivider />
            <SideCell $h={80}><PlusIcon s={15} color="#4a2b36" /></SideCell>
            <SideDivider $push />
            <SideCell $h={55}><GearIcon /></SideCell>
          </Sidebar>
        </BrowserBody>
      </Browser>
      <Taskbar>
        <Widgets>
          <TorchIcon />
          <WidgetLines>
            <Fit w={71}>Swimming</Fit>
            <Muted><Fit w={73.5}>Final result</Fit></Muted>
          </WidgetLines>
        </Widgets>
        <StartIcon />
        <SearchBox>
          <SearchGlass />
          <SearchText><Fit w={52}>Search</Fit></SearchText>
          <SummerIcon />
        </SearchBox>
        {apps.map((a, i) => (
          <AppSlot key={i} $active={a.active} $dot={a.dot}><a.icon /></AppSlot>
        ))}
        <Tray>
          <TrayCell $w={40}><ChevronUp /></TrayCell>
          <TrayCell $w={40}><CloudOff /></TrayCell>
          <TrayCell $w={40}><Wifi /></TrayCell>
          <TrayCell $w={20}><Volume /></TrayCell>
          <TrayCell $w={40}><Battery /></TrayCell>
          <Clock>
            <Fit w={54}>1:51 PM</Fit>
            <Fit w={62}>8/1/2024</Fit>
          </Clock>
          <TrayCell $w={38}><Bell /></TrayCell>
          <TrayCell $w={52}><CopilotPre /></TrayCell>
        </Tray>
      </Taskbar>
    </Desktop>
  );
}
